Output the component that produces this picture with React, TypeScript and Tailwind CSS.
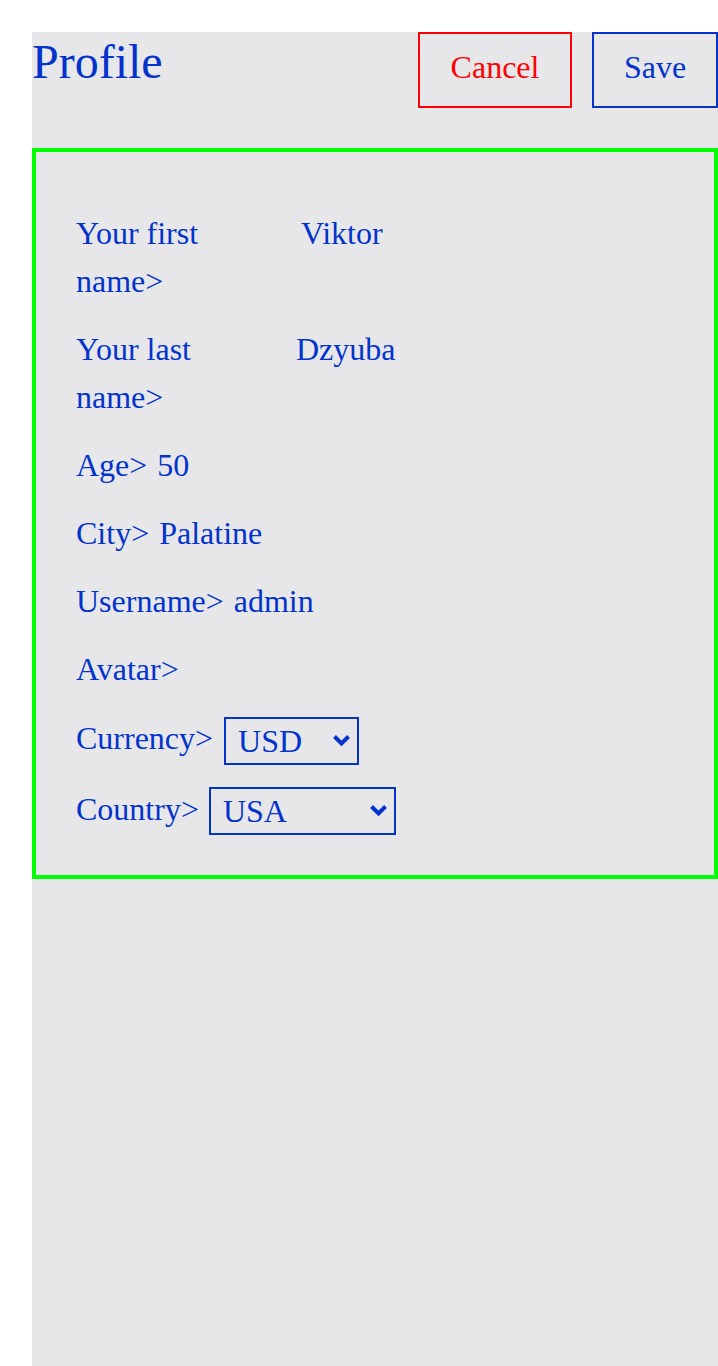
import React from "react";

const blue = "text-[#0033cc]";

function Row({ children, className = "" }: { children: React.ReactNode; className?: string }) {
    return <div className={`flex text-[32px] leading-[48px] ${blue} ${className}`}>{children}</div>;
}

function Dropdown({ value, options, width }: { value: string; options: string[]; width: string }) {
    return (
        <div className={`relative mt-[2.5px] ${width}`}>
            <select
                defaultValue={value}
                className={`appearance-none w-full h-[48px] border-2 border-[#0033cc] bg-transparent pl-[12px] text-[32px] leading-[44px] ${blue} outline-none`}
            >
                {options.map((o) => (
                    <option key={o}>{o}</option>
                ))}
            </select>
            <svg
                className="absolute right-[8px] top-[17px] pointer-events-none"
                width="19"
                height="13"
                viewBox="0 0 19 13"
            >
                <polyline points="2.5,2.5 9.5,9.5 16.5,2.5" fill="none" stroke="#0033cc" strokeWidth="4" />
            </svg>
        </div>
    );
}

export default function App() {
    return (
        <div className="bg-white pl-8 pt-8 font-['Liberation_Serif',serif]">
            <div className="bg-[#e7e7ea] min-h-[1334px]">
                {/* header */}
                <div className="flex items-start justify-between">
                    <h1 className={`text-[48px] leading-[60px] ${blue}`}>Profile</h1>
                    <div className="flex gap-5">
                        <button className="w-[154px] h-[76px] pb-[6px] border-2 border-[#ff0000] text-[32px] text-[#ff0000]">
                            Cancel
                        </button>
                        <button className={`w-[126px] h-[76px] pb-[6px] border-2 border-[#0033cc] text-[32px] ${blue}`}>
                            Save
                        </button>
                    </div>
                </div>

                {/* form */}
                <div className="mt-10 border-4 border-[#00ff00] pl-10 pt-[57px] pb-10 flex flex-col gap-5">
                    <Row>
                        <span className="w-[124px]">Your first name&gt;</span>
                        <span className="ml-[101px]">Viktor</span>
                    </Row>
                    <Row>
                        <span className="w-[118px]">Your last name&gt;</span>
                        <span className="ml-[102px]">Dzyuba</span>
                    </Row>
                    <Row className="gap-[10px]">
                        <span>Age&gt;</span>
                        <span>50</span>
                    </Row>
                    <Row className="gap-[10px]">
                        <span>City&gt;</span>
                        <span>Palatine</span>
                    </Row>
                    <Row className="gap-[10px]">
                        <span>Username&gt;</span>
                        <span>admin</span>
                    </Row>
                    <Row>Avatar&gt;</Row>
                    <Row className="items-start gap-[11px] mt-[1px]">
                        <span>Currency&gt;</span>
                        <Dropdown value="USD" options={["USD", "EUR", "UAH"]} width="w-[135px]" />
                    </Row>
                    <Row className="items-start gap-[10px]">
                        <span>Country&gt;</span>
                        <Dropdown value="USA" options={["USA", "Ukraine", "Germany"]} width="w-[187px]" />
                    </Row>
                </div>
            </div>
        </div>
    );
}
